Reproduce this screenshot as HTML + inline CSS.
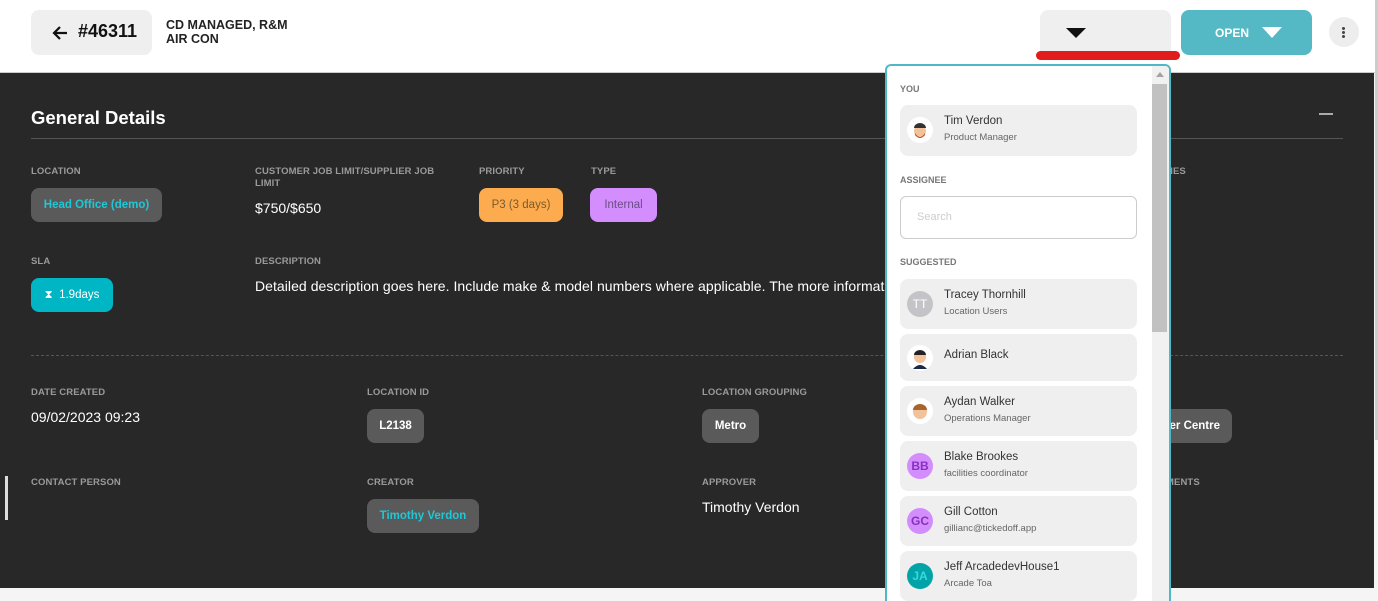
<!DOCTYPE html>
<html><head><meta charset="utf-8"><style>
*{margin:0;padding:0;box-sizing:border-box}
html,body{width:1378px;height:601px;overflow:hidden}
body{position:relative;background:#f5f5f5;font-family:"Liberation Sans",sans-serif}
.a{position:absolute}
.hdr{left:0;top:0;width:1378px;height:73px;background:#fff;border-bottom:1px solid #ccc}
.dark{left:0;top:73px;width:1374px;height:515px;background:#282828}
.lbl{font-size:9.5px;color:#9a9a9a;font-weight:bold;letter-spacing:.1px}
.val{font-size:14px;color:#fff}
.pill{border-radius:8px;font-size:11.5px;font-weight:bold;display:flex;align-items:center;justify-content:center}
.card{left:900px;width:237px;background:#efefef;border-radius:8px}
.nm{position:absolute;left:44px;font-size:11.5px;color:#333}
.sub{position:absolute;left:44px;font-size:9.5px;color:#666}
.av{position:absolute;left:7px;width:26px;height:26px;border-radius:50%;display:flex;align-items:center;justify-content:center;font-size:12px;font-weight:bold}
.sec{font-size:9px;color:#777;font-weight:bold;left:900px}
</style></head><body>
<div class="a hdr"></div>
<div class="a" style="left:31px;top:10px;width:121px;height:45px;background:#efefef;border-radius:8px"></div>
<svg class="a" style="left:51px;top:25px" width="18" height="16" viewBox="0 0 18 16"><path d="M16 8H3M9 2L3 8l6 6" stroke="#111" stroke-width="2.2" fill="none"/></svg>
<div class="a" style="left:78px;top:21px;font-size:18px;font-weight:bold;color:#111">#46311</div>
<div class="a" style="left:166px;top:18px;font-size:12.5px;font-weight:bold;color:#222;line-height:14px">CD MANAGED, R&amp;M<br>AIR CON</div>
<div class="a" style="left:1040px;top:10px;width:131px;height:45px;background:#efefef;border-radius:8px 8px 0 0"></div>
<svg class="a" style="left:1066px;top:28px" width="20" height="10"><path d="M0 0h20L10 10z" fill="#111"/></svg>
<div class="a" style="left:1036px;top:51px;width:144px;height:9px;background:#e21b1b;border-radius:5px"></div>
<div class="a" style="left:1181px;top:10px;width:131px;height:45px;background:#54b8c5;border-radius:8px"></div>
<div class="a" style="left:1215px;top:26px;font-size:12px;font-weight:bold;color:#fff">OPEN</div>
<svg class="a" style="left:1262px;top:27px" width="20" height="11"><path d="M0 0h20L10 11z" fill="#fff"/></svg>
<div class="a" style="left:1329px;top:17px;width:30px;height:30px;border-radius:50%;background:#ededed"></div>
<div class="a" style="left:1342px;top:27px;width:3px;height:3px;border-radius:2px;background:#444;box-shadow:0 4px 0 #444,0 8px 0 #444"></div>
<div class="a" style="left:1375px;top:0;width:3px;height:440px;background:#ccc"></div>

<div class="a dark"></div>
<div class="a" style="left:31px;top:107px;font-size:18.5px;font-weight:bold;color:#fff">General Details</div>
<div class="a" style="left:1319px;top:113px;width:14px;height:2px;background:#aaa"></div>
<div class="a" style="left:31px;top:138px;width:1312px;height:1px;background:#555"></div>
<div class="a lbl" style="left:31px;top:166px">LOCATION</div>
<div class="a pill" style="left:31px;top:188px;width:131px;height:34px;background:#5a5a5a;color:#1ec8d8">Head Office (demo)</div>
<div class="a lbl" style="left:255px;top:166px;line-height:12px">CUSTOMER JOB LIMIT/SUPPLIER JOB<br>LIMIT</div>
<div class="a val" style="left:255px;top:200px">$750/$650</div>
<div class="a lbl" style="left:479px;top:166px">PRIORITY</div>
<div class="a pill" style="left:479px;top:188px;width:84px;height:34px;background:#fdab4f;color:#7a5a2a;font-weight:normal">P3 (3 days)</div>
<div class="a lbl" style="left:591px;top:166px">TYPE</div>
<div class="a pill" style="left:590px;top:188px;width:67px;height:34px;background:#d38dfd;color:#6a4d86;font-weight:normal">Internal</div>
<div class="a lbl" style="left:1166px;top:166px">NES</div>
<div class="a lbl" style="left:31px;top:256px">SLA</div>
<div class="a pill" style="left:31px;top:278px;width:82px;height:34px;background:#00b5c4;color:#fff;font-weight:normal">⧗&nbsp;&nbsp;1.9days</div>
<div class="a lbl" style="left:255px;top:256px">DESCRIPTION</div>
<div class="a val" style="left:255px;top:278px;white-space:nowrap;letter-spacing:.05px">Detailed description goes here. Include make &amp; model numbers where applicable. The more informat</div>
<div class="a" style="left:31px;top:355px;width:1312px;border-top:1px dashed #555"></div>
<div class="a lbl" style="left:31px;top:387px">DATE CREATED</div>
<div class="a val" style="left:31px;top:409px">09/02/2023 09:23</div>
<div class="a lbl" style="left:367px;top:387px">LOCATION ID</div>
<div class="a pill" style="left:367px;top:409px;width:57px;height:34px;background:#5a5a5a;color:#fff">L2138</div>
<div class="a lbl" style="left:702px;top:387px">LOCATION GROUPING</div>
<div class="a pill" style="left:702px;top:409px;width:57px;height:34px;background:#5a5a5a;color:#fff">Metro</div>
<div class="a pill" style="left:1140px;top:409px;width:92px;height:34px;background:#5a5a5a;color:#fff;justify-content:flex-end;padding-right:12px">er Centre</div>
<div class="a" style="left:5px;top:476px;width:3px;height:44px;background:#ddd"></div>
<div class="a lbl" style="left:31px;top:477px">CONTACT PERSON</div>
<div class="a lbl" style="left:367px;top:477px">CREATOR</div>
<div class="a pill" style="left:367px;top:499px;width:112px;height:34px;background:#5a5a5a;color:#1ec8d8">Timothy Verdon</div>
<div class="a lbl" style="left:702px;top:477px">APPROVER</div>
<div class="a val" style="left:702px;top:499px">Timothy Verdon</div>
<div class="a lbl" style="left:1166px;top:477px">MENTS</div>

<div class="a" style="left:885px;top:64px;width:286px;height:560px;background:#fff;border:2px solid #4fb8c6;border-radius:6px;overflow:hidden">
 <div class="a" style="left:265px;top:0;width:17px;height:560px;background:#f1f1f1"></div>
 <div class="a" style="left:265px;top:18px;width:15px;height:248px;background:#c1c1c1"></div>
 <svg class="a" style="left:269px;top:6px" width="8" height="5"><path d="M0 5L4 0l4 5z" fill="#a3a3a3"/></svg>
</div>
<div class="a sec" style="top:84px">YOU</div>
<div class="a card" style="top:105px;height:51px">
 <div class="av" style="top:12px;background:#fff"><svg width="22" height="22" viewBox="0 0 22 22"><circle cx="11" cy="12" r="6" fill="#f2c29a"/><path d="M5 9a6 5 0 0 1 12 0z" fill="#333"/><path d="M6 14q5 8 10 0v2q-5 6-10 0z" fill="#c0502a"/></svg></div>
 <div class="nm" style="top:10px">Tim Verdon</div><div class="sub" style="top:27px">Product Manager</div>
</div>
<div class="a sec" style="top:175px">ASSIGNEE</div>
<div class="a" style="left:900px;top:196px;width:237px;height:43px;border:1px solid #ccc;border-radius:6px;background:#fff"></div>
<div class="a" style="left:917px;top:211px;font-size:11px;color:#ccc">Search</div>
<div class="a sec" style="top:257px">SUGGESTED</div>
<div class="a card" style="top:279px;height:50px"><div class="av" style="top:12px;background:#c4c4c8;color:#fff;font-weight:normal">TT</div><div class="nm" style="top:10px">Tracey Thornhill</div><div class="sub" style="top:27px">Location Users</div></div>
<div class="a card" style="top:334px;height:47px"><div class="av" style="top:11px;background:#fff"><svg width="22" height="22" viewBox="0 0 22 22"><circle cx="11" cy="10" r="6" fill="#f2c29a"/><path d="M5 8a6 5 0 0 1 12 0z" fill="#222"/><path d="M4 22q7-8 14 0z" fill="#1c2a4a"/></svg></div><div class="nm" style="top:15px">Adrian Black</div></div>
<div class="a card" style="top:386px;height:50px"><div class="av" style="top:12px;background:#fff"><svg width="22" height="22" viewBox="0 0 22 22"><circle cx="11" cy="12" r="7" fill="#f2c29a"/><path d="M4 10a7 6 0 0 1 14 0z" fill="#a8642a"/></svg></div><div class="nm" style="top:10px">Aydan Walker</div><div class="sub" style="top:27px">Operations Manager</div></div>
<div class="a card" style="top:441px;height:50px"><div class="av" style="top:12px;background:#d38dfd;color:#8a2fc0">BB</div><div class="nm" style="top:10px">Blake Brookes</div><div class="sub" style="top:27px">facilities coordinator</div></div>
<div class="a card" style="top:496px;height:50px"><div class="av" style="top:12px;background:#d38dfd;color:#8a2fc0">GC</div><div class="nm" style="top:10px">Gill Cotton</div><div class="sub" style="top:27px">gillianc@tickedoff.app</div></div>
<div class="a card" style="top:551px;height:50px"><div class="av" style="top:12px;background:#00a3a8;color:#3ad8e0">JA</div><div class="nm" style="top:10px">Jeff ArcadedevHouse1</div><div class="sub" style="top:27px">Arcade Toa</div></div>
</body></html>
